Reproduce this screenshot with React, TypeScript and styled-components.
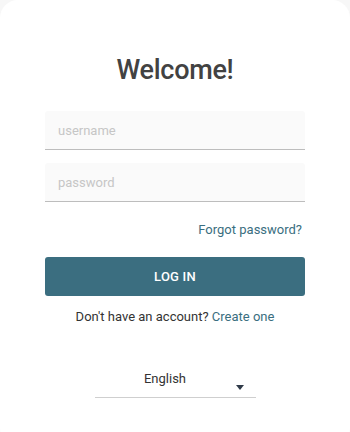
import React from "react";
import styled, { createGlobalStyle } from "styled-components";

const Global = createGlobalStyle`
  html, body { margin: 0; padding: 0; background: #f7f7f7; overflow: hidden; }
  body { font-family: Roboto, "Liberation Sans", sans-serif; }
  * { box-sizing: border-box; }
`;

const Card = styled.div`
  width: 350px;
  min-height: 446px;
  background: #ffffff;
  border-radius: 18px;
  display: flex;
  flex-direction: column;
  align-items: center;
  padding: 53px 45px 0;
`;

const Title = styled.h1`
  margin: 0 0 24px;
  font-size: 27px;
  font-weight: 500;
  color: #424242;
  line-height: 34px;
  letter-spacing: -0.3px;
`;

const Field = styled.input<{ $gap?: number }>`
  width: 260px;
  height: 39px;
  border: none;
  border-bottom: 1px solid #bdbdbd;
  border-radius: 3px 3px 0 0;
  background: #fafafa;
  padding: 0 13px;
  font-family: Roboto, "Liberation Sans", sans-serif;
  font-size: 13px;
  color: #333;
  margin-bottom: ${(p) => p.$gap ?? 0}px;
  outline: none;
  &::placeholder { color: #c6c6c6; }
`;

const LinkRow = styled.div`
  width: 260px;
  display: flex;
  justify-content: flex-end;
  margin-top: 19px;
  padding-right: 3px;
`;

const Link = styled.a`
  color: #3a6e80;
  font-size: 13px;
  text-decoration: none;
  line-height: 18px;
`;

const Button = styled.button`
  width: 260px;
  height: 39px;
  margin-top: 18px;
  border: none;
  border-radius: 3px;
  background: #3b6e80;
  color: #ffffff;
  font-family: Roboto, "Liberation Sans", sans-serif;
  font-size: 13px;
  font-weight: 500;
  letter-spacing: 0.2px;
`;

const Note = styled.p`
  margin: 12px 0 0;
  font-size: 13px;
  line-height: 18px;
  color: #333333;
`;

const Select = styled.div`
  margin-top: 44px;
  width: 161px;
  height: 28px;
  border-bottom: 1px solid #cfcfcf;
  position: relative;
  display: flex;
  justify-content: center;
  padding-right: 20px;
  font-size: 13px;
  color: #333;
  line-height: 18px;
`;

const Arrow = styled.span`
  position: absolute;
  right: 12px;
  top: 15px;
  width: 0;
  height: 0;
  border-left: 4.5px solid transparent;
  border-right: 4.5px solid transparent;
  border-top: 5px solid #2f3a48;
`;

export default function App() {
  return (
    <>
      <Global />
      <Card>
        <Title>Welcome!</Title>
        <Field placeholder="username" $gap={13} />
        <Field placeholder="password" type="password" />
        <LinkRow>
          <Link>Forgot password?</Link>
        </LinkRow>
        <Button>LOG IN</Button>
        <Note>
          Don't have an account? <Link>Create one</Link>
        </Note>
        <Select>
          English
          <Arrow />
        </Select>
      </Card>
    </>
  );
}
